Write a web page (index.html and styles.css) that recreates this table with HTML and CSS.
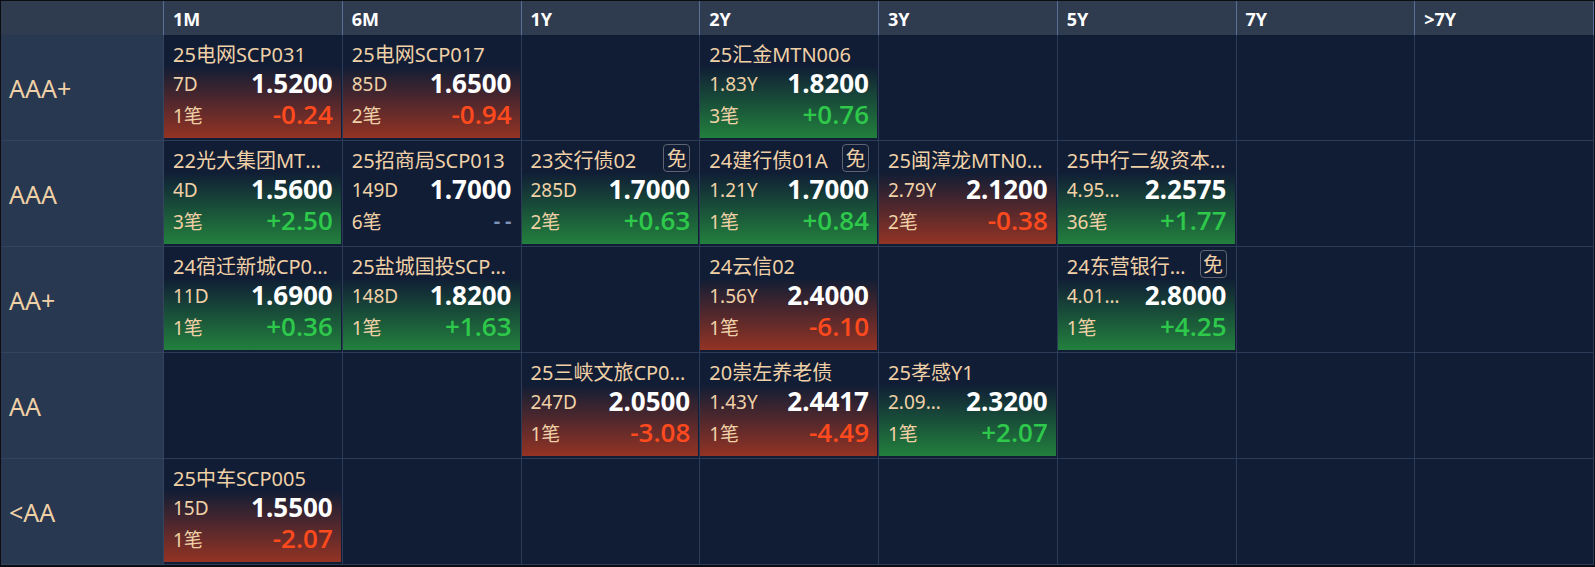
FILE: index.html
```html
<!DOCTYPE html>
<html lang="zh-CN">
<head>
<meta charset="utf-8">
<title>信用债成交矩阵</title>
<link rel="stylesheet" href="styles.css">
</head>
<body>
<div class="board">
  <div class="hcell"></div>
  <div class="hcell">1M</div>
  <div class="hcell">6M</div>
  <div class="hcell">1Y</div>
  <div class="hcell">2Y</div>
  <div class="hcell">3Y</div>
  <div class="hcell">5Y</div>
  <div class="hcell">7Y</div>
  <div class="hcell">&gt;7Y</div>

  <!-- AAA+ -->
  <div class="rcell">AAA+</div>
  <div class="cell"><div class="card down">
    <div class="title"><span class="name">25电网SCP031</span></div>
    <div class="line"><span class="lbl">7D</span><span class="val">1.5200</span></div>
    <div class="line"><span class="lbl">1笔</span><span class="chg">-0.24</span></div>
  </div></div>
  <div class="cell"><div class="card down">
    <div class="title"><span class="name">25电网SCP017</span></div>
    <div class="line"><span class="lbl">85D</span><span class="val">1.6500</span></div>
    <div class="line"><span class="lbl">2笔</span><span class="chg">-0.94</span></div>
  </div></div>
  <div class="cell"></div>
  <div class="cell"><div class="card up">
    <div class="title"><span class="name">25汇金MTN006</span></div>
    <div class="line"><span class="lbl">1.83Y</span><span class="val">1.8200</span></div>
    <div class="line"><span class="lbl">3笔</span><span class="chg">+0.76</span></div>
  </div></div>
  <div class="cell"></div>
  <div class="cell"></div>
  <div class="cell"></div>
  <div class="cell"></div>

  <!-- AAA -->
  <div class="rcell">AAA</div>
  <div class="cell"><div class="card up">
    <div class="title"><span class="name">22光大集团MTN001</span></div>
    <div class="line"><span class="lbl">4D</span><span class="val">1.5600</span></div>
    <div class="line"><span class="lbl">3笔</span><span class="chg">+2.50</span></div>
  </div></div>
  <div class="cell"><div class="card flat">
    <div class="title"><span class="name">25招商局SCP013</span></div>
    <div class="line"><span class="lbl">149D</span><span class="val">1.7000</span></div>
    <div class="line"><span class="lbl">6笔</span><span class="chg">--</span></div>
  </div></div>
  <div class="cell"><div class="card up">
    <div class="title"><span class="name">23交行债02</span><span class="tag">免</span></div>
    <div class="line"><span class="lbl">285D</span><span class="val">1.7000</span></div>
    <div class="line"><span class="lbl">2笔</span><span class="chg">+0.63</span></div>
  </div></div>
  <div class="cell"><div class="card up">
    <div class="title"><span class="name">24建行债01A</span><span class="tag">免</span></div>
    <div class="line"><span class="lbl">1.21Y</span><span class="val">1.7000</span></div>
    <div class="line"><span class="lbl">1笔</span><span class="chg">+0.84</span></div>
  </div></div>
  <div class="cell"><div class="card down">
    <div class="title"><span class="name">25闽漳龙MTN001</span></div>
    <div class="line"><span class="lbl">2.79Y</span><span class="val">2.1200</span></div>
    <div class="line"><span class="lbl">2笔</span><span class="chg">-0.38</span></div>
  </div></div>
  <div class="cell"><div class="card up">
    <div class="title"><span class="name">25中行二级资本债01</span></div>
    <div class="line"><span class="lbl">4.95Y+5Y</span><span class="val">2.2575</span></div>
    <div class="line"><span class="lbl">36笔</span><span class="chg">+1.77</span></div>
  </div></div>
  <div class="cell"></div>
  <div class="cell"></div>

  <!-- AA+ -->
  <div class="rcell">AA+</div>
  <div class="cell"><div class="card up">
    <div class="title"><span class="name">24宿迁新城CP001</span></div>
    <div class="line"><span class="lbl">11D</span><span class="val">1.6900</span></div>
    <div class="line"><span class="lbl">1笔</span><span class="chg">+0.36</span></div>
  </div></div>
  <div class="cell"><div class="card up">
    <div class="title"><span class="name">25盐城国投SCP002</span></div>
    <div class="line"><span class="lbl">148D</span><span class="val">1.8200</span></div>
    <div class="line"><span class="lbl">1笔</span><span class="chg">+1.63</span></div>
  </div></div>
  <div class="cell"></div>
  <div class="cell"><div class="card down">
    <div class="title"><span class="name">24云信02</span></div>
    <div class="line"><span class="lbl">1.56Y</span><span class="val">2.4000</span></div>
    <div class="line"><span class="lbl">1笔</span><span class="chg">-6.10</span></div>
  </div></div>
  <div class="cell"></div>
  <div class="cell"><div class="card up">
    <div class="title"><span class="name">24东营银行二级01</span><span class="tag">免</span></div>
    <div class="line"><span class="lbl">4.01Y+5Y</span><span class="val">2.8000</span></div>
    <div class="line"><span class="lbl">1笔</span><span class="chg">+4.25</span></div>
  </div></div>
  <div class="cell"></div>
  <div class="cell"></div>

  <!-- AA -->
  <div class="rcell">AA</div>
  <div class="cell"></div>
  <div class="cell"></div>
  <div class="cell"><div class="card down">
    <div class="title"><span class="name">25三峡文旅CP001</span></div>
    <div class="line"><span class="lbl">247D</span><span class="val">2.0500</span></div>
    <div class="line"><span class="lbl">1笔</span><span class="chg">-3.08</span></div>
  </div></div>
  <div class="cell"><div class="card down">
    <div class="title"><span class="name">20崇左养老债</span></div>
    <div class="line"><span class="lbl">1.43Y</span><span class="val">2.4417</span></div>
    <div class="line"><span class="lbl">1笔</span><span class="chg">-4.49</span></div>
  </div></div>
  <div class="cell"><div class="card up">
    <div class="title"><span class="name">25孝感Y1</span></div>
    <div class="line"><span class="lbl">2.09Y+NY</span><span class="val">2.3200</span></div>
    <div class="line"><span class="lbl">1笔</span><span class="chg">+2.07</span></div>
  </div></div>
  <div class="cell"></div>
  <div class="cell"></div>
  <div class="cell"></div>

  <!-- <AA -->
  <div class="rcell">&lt;AA</div>
  <div class="cell"><div class="card down">
    <div class="title"><span class="name">25中车SCP005</span></div>
    <div class="line"><span class="lbl">15D</span><span class="val">1.5500</span></div>
    <div class="line"><span class="lbl">1笔</span><span class="chg">-2.07</span></div>
  </div></div>
  <div class="cell"></div>
  <div class="cell"></div>
  <div class="cell"></div>
  <div class="cell"></div>
  <div class="cell"></div>
  <div class="cell"></div>
  <div class="cell"></div>
</div>
</body>
</html>
```

FILE: styles.css
```css
* { box-sizing: border-box; }

html, body {
  margin: 0;
  padding: 0;
  background: #0b0d12;
  font-family: "Noto Sans", "Noto Sans CJK SC", sans-serif;
}

.board {
  margin: 1px 0 0 1px;
  width: 1593px;
  display: grid;
  grid-template-columns: 163px repeat(8, 1fr);
  grid-template-rows: 34px repeat(5, 106px);
  background: #101d35;
}

.hcell {
  background: #2f3b4f;
  border-right: 1px solid #5a6e98;
  color: #ffffff;
  font-weight: 700;
  font-size: 18px;
  padding: 3px 0 0 9px;
  line-height: 31px;
}

.rcell {
  background: #283850;
  border-right: 1px solid #34445f;
  border-bottom: 1px solid #34445f;
  color: #f0d1a7;
  font-size: 25px;
  display: flex;
  align-items: center;
  padding-left: 8px;
}

.cell {
  border-right: 1px solid #2c3b57;
  border-bottom: 1px solid #2c3b57;
  padding: 0 1px 2px 0;
  min-width: 0;
}

.card {
  height: 100%;
  padding: 6px 8px 0 9px;
  display: flex;
  flex-direction: column;
  color: #f0d1a7;
}

.card.down { background: linear-gradient(to bottom, #101d35 30%, #933324 100%); }
.card.up   { background: linear-gradient(to bottom, #101d35 30%, #22803d 100%); }
.card.flat { background: #101d35; }

.title {
  display: flex;
  align-items: flex-start;
  height: 27px;
  min-width: 0;
}

.name {
  flex: 1 1 auto;
  min-width: 0;
  font-size: 20px;
  line-height: 27px;
  white-space: nowrap;
  overflow: hidden;
  text-overflow: ellipsis;
}

.tag {
  flex: 0 0 auto;
  width: 27px;
  height: 28px;
  margin-top: -3px;
  margin-left: 4px;
  border: 1px solid #5f6472;
  border-radius: 4px;
  font-size: 20px;
  line-height: 25px;
  text-align: center;
  font-family: "Noto Sans CJK SC", sans-serif;
}

.line {
  display: flex;
  align-items: center;
  justify-content: space-between;
  height: 31px;
}

.lbl {
  font-size: 19px;
  max-width: 58px;
  white-space: nowrap;
  overflow: hidden;
  text-overflow: ellipsis;
}

.val {
  color: #ffffff;
  font-weight: 700;
  font-size: 26px;
  line-height: 31px;
}

.chg {
  font-family: "Open Sans", "Noto Sans", sans-serif;
  font-weight: 600;
  font-size: 26px;
  line-height: 31px;
}

.down .chg { color: #ff4a1e; }
.up .chg { color: #2ec84b; }
.flat .chg { color: #7f93b8; font-size: 20px; font-weight: 700; letter-spacing: 5px; margin-right: -5px; }
```
